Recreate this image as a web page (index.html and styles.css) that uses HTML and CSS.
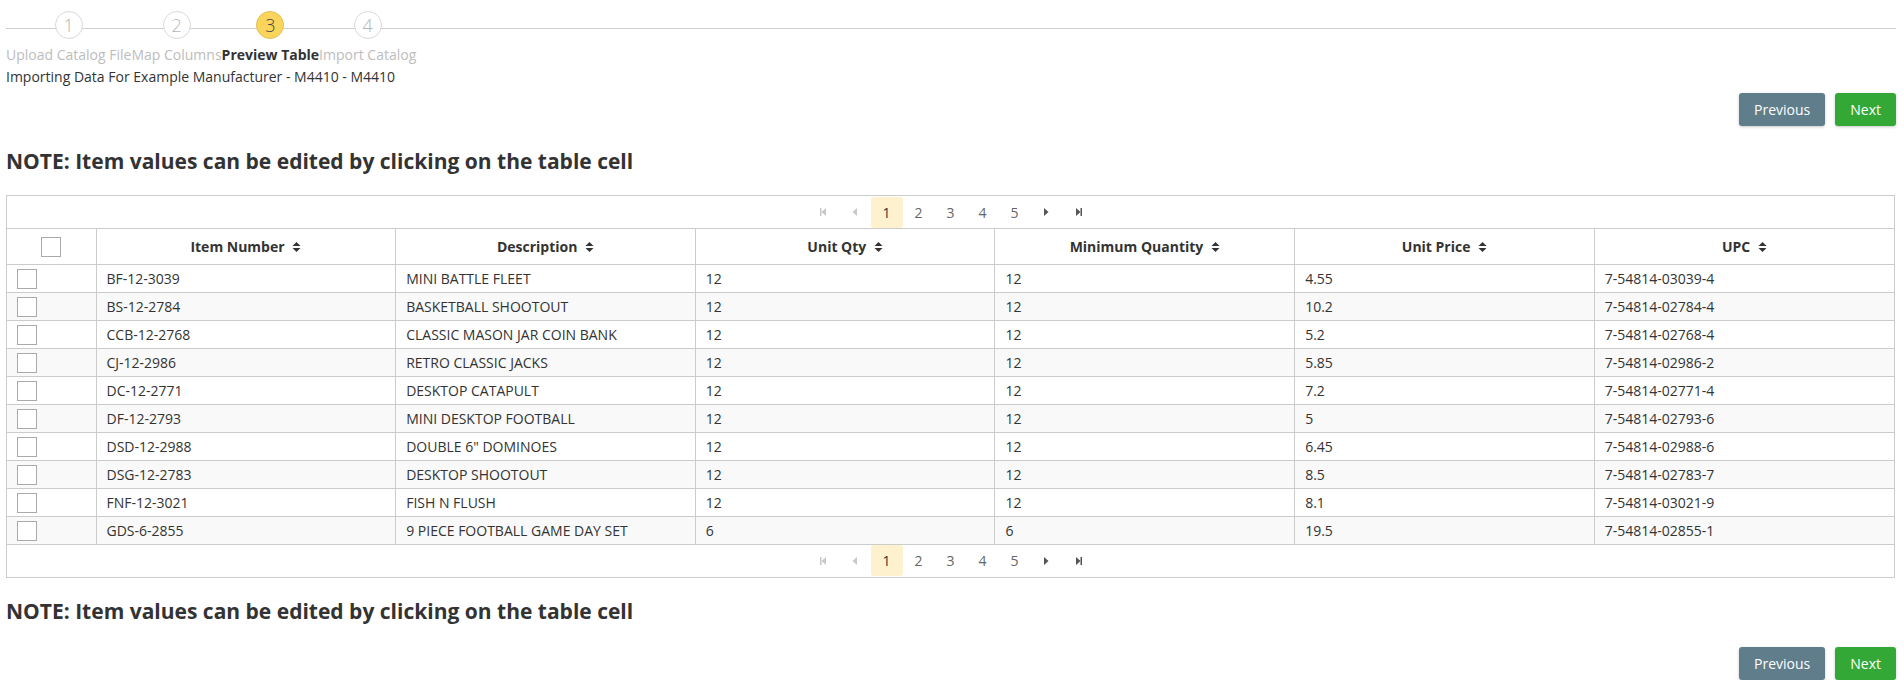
FILE: index.html
```html
<!DOCTYPE html>
<html>
<head>
<meta charset="utf-8">
<link rel="stylesheet" href="styles.css">
</head>
<body>
<div class="page">
  <div class="stepper">
    <div class="step"><span class="circle">1</span><span class="label">Upload Catalog File</span></div>
    <div class="step"><span class="circle">2</span><span class="label">Map Columns</span></div>
    <div class="step active"><span class="circle">3</span><span class="label">Preview Table</span></div>
    <div class="step"><span class="circle">4</span><span class="label">Import Catalog</span></div>
  </div>
  <div class="subtitle">Importing Data For Example Manufacturer - M4410 - M4410</div>

  <div class="actions">
    <button class="btn btn-prev">Previous</button>
    <button class="btn btn-next">Next</button>
  </div>

  <h3 class="note">NOTE: Item values can be edited by clicking on the table cell</h3>

  <div class="grid">
    <div class="pager">
      <span class="pg disabled"><svg width="6" height="8" viewBox="0 0 6 8"><rect x="0" y="0" width="1.5" height="8" fill="currentColor"/><path d="M6 0 L1.5 4 L6 8 Z" fill="currentColor"/></svg></span>
      <span class="pg disabled"><svg width="5" height="8" viewBox="0 0 5 8"><path d="M5 0 L0.5 4 L5 8 Z" fill="currentColor"/></svg></span>
      <span class="pg current">1</span>
      <span class="pg">2</span>
      <span class="pg">3</span>
      <span class="pg">4</span>
      <span class="pg">5</span>
      <span class="pg nav"><svg width="5" height="8" viewBox="0 0 5 8"><path d="M0 0 L4.5 4 L0 8 Z" fill="currentColor"/></svg></span>
      <span class="pg nav"><svg width="6" height="8" viewBox="0 0 6 8"><path d="M0 0 L4.5 4 L0 8 Z" fill="currentColor"/><rect x="4.5" y="0" width="1.5" height="8" fill="currentColor"/></svg></span>
    </div>
    <table class="items">
      <colgroup>
        <col class="c-check"><col><col><col><col><col><col>
      </colgroup>
      <thead>
        <tr>
          <th class="check-head"><span class="box"></span></th>
          <th>Item Number <svg class="sort" width="9" height="12" viewBox="0 0 9 12"><path d="M0.5 5 L4.5 1 L8.5 5 Z M0.5 7 L8.5 7 L4.5 11 Z" fill="currentColor"/></svg></th>
          <th>Description <svg class="sort" width="9" height="12" viewBox="0 0 9 12"><path d="M0.5 5 L4.5 1 L8.5 5 Z M0.5 7 L8.5 7 L4.5 11 Z" fill="currentColor"/></svg></th>
          <th>Unit Qty <svg class="sort" width="9" height="12" viewBox="0 0 9 12"><path d="M0.5 5 L4.5 1 L8.5 5 Z M0.5 7 L8.5 7 L4.5 11 Z" fill="currentColor"/></svg></th>
          <th>Minimum Quantity <svg class="sort" width="9" height="12" viewBox="0 0 9 12"><path d="M0.5 5 L4.5 1 L8.5 5 Z M0.5 7 L8.5 7 L4.5 11 Z" fill="currentColor"/></svg></th>
          <th>Unit Price <svg class="sort" width="9" height="12" viewBox="0 0 9 12"><path d="M0.5 5 L4.5 1 L8.5 5 Z M0.5 7 L8.5 7 L4.5 11 Z" fill="currentColor"/></svg></th>
          <th>UPC <svg class="sort" width="9" height="12" viewBox="0 0 9 12"><path d="M0.5 5 L4.5 1 L8.5 5 Z M0.5 7 L8.5 7 L4.5 11 Z" fill="currentColor"/></svg></th>
        </tr>
      </thead>
      <tbody>
        <tr><td class="check"><span class="box"></span></td><td>BF-12-3039</td><td>MINI BATTLE FLEET</td><td>12</td><td>12</td><td>4.55</td><td>7-54814-03039-4</td></tr>
        <tr><td class="check"><span class="box"></span></td><td>BS-12-2784</td><td>BASKETBALL SHOOTOUT</td><td>12</td><td>12</td><td>10.2</td><td>7-54814-02784-4</td></tr>
        <tr><td class="check"><span class="box"></span></td><td>CCB-12-2768</td><td>CLASSIC MASON JAR COIN BANK</td><td>12</td><td>12</td><td>5.2</td><td>7-54814-02768-4</td></tr>
        <tr><td class="check"><span class="box"></span></td><td>CJ-12-2986</td><td>RETRO CLASSIC JACKS</td><td>12</td><td>12</td><td>5.85</td><td>7-54814-02986-2</td></tr>
        <tr><td class="check"><span class="box"></span></td><td>DC-12-2771</td><td>DESKTOP CATAPULT</td><td>12</td><td>12</td><td>7.2</td><td>7-54814-02771-4</td></tr>
        <tr><td class="check"><span class="box"></span></td><td>DF-12-2793</td><td>MINI DESKTOP FOOTBALL</td><td>12</td><td>12</td><td>5</td><td>7-54814-02793-6</td></tr>
        <tr><td class="check"><span class="box"></span></td><td>DSD-12-2988</td><td>DOUBLE 6" DOMINOES</td><td>12</td><td>12</td><td>6.45</td><td>7-54814-02988-6</td></tr>
        <tr><td class="check"><span class="box"></span></td><td>DSG-12-2783</td><td>DESKTOP SHOOTOUT</td><td>12</td><td>12</td><td>8.5</td><td>7-54814-02783-7</td></tr>
        <tr><td class="check"><span class="box"></span></td><td>FNF-12-3021</td><td>FISH N FLUSH</td><td>12</td><td>12</td><td>8.1</td><td>7-54814-03021-9</td></tr>
        <tr><td class="check"><span class="box"></span></td><td>GDS-6-2855</td><td>9 PIECE FOOTBALL GAME DAY SET</td><td>6</td><td>6</td><td>19.5</td><td>7-54814-02855-1</td></tr>
      </tbody>
    </table>
    <div class="pager bottom">
      <span class="pg disabled"><svg width="6" height="8" viewBox="0 0 6 8"><rect x="0" y="0" width="1.5" height="8" fill="currentColor"/><path d="M6 0 L1.5 4 L6 8 Z" fill="currentColor"/></svg></span>
      <span class="pg disabled"><svg width="5" height="8" viewBox="0 0 5 8"><path d="M5 0 L0.5 4 L5 8 Z" fill="currentColor"/></svg></span>
      <span class="pg current">1</span>
      <span class="pg">2</span>
      <span class="pg">3</span>
      <span class="pg">4</span>
      <span class="pg">5</span>
      <span class="pg nav"><svg width="5" height="8" viewBox="0 0 5 8"><path d="M0 0 L4.5 4 L0 8 Z" fill="currentColor"/></svg></span>
      <span class="pg nav"><svg width="6" height="8" viewBox="0 0 6 8"><path d="M0 0 L4.5 4 L0 8 Z" fill="currentColor"/><rect x="4.5" y="0" width="1.5" height="8" fill="currentColor"/></svg></span>
    </div>
  </div>

  <h3 class="note note-bottom">NOTE: Item values can be edited by clicking on the table cell</h3>

  <div class="actions actions-bottom">
    <button class="btn btn-prev">Previous</button>
    <button class="btn btn-next">Next</button>
  </div>
</div>
</body>
</html>
```

FILE: styles.css
```css
* { box-sizing: border-box; }
html, body { margin: 0; padding: 0; background: #fff; }
body {
  font-family: "Open Sans", "Liberation Sans", sans-serif;
  color: #333;
  font-size: 14px;
}
.page {
  padding: 0 8px 0 6px;
}
.stepper {
  position: relative;
  display: flex;
  padding-top: 11px;
}
.stepper::before {
  content: "";
  position: absolute;
  left: 0;
  right: 0;
  top: 28px;
  height: 1px;
  background: #cfcfcf;
}
.step {
  position: relative;
  display: flex;
  flex-direction: column;
  align-items: center;
}
.circle {
  width: 28px;
  height: 28px;
  border-radius: 50%;
  border: 1px solid #d9d9d9;
  background: #fff;
  color: #b5b5b5;
  font-size: 18px;
  line-height: 26px;
  text-align: center;
  font-weight: 300;
}
.step.active .circle {
  background: #f9d55b;
  border-color: #e5c04e;
  color: #4a4a4a;
}
.label {
  margin-top: 6px;
  line-height: 20px;
  color: #bdbdbd;
  white-space: nowrap;
}
.step.active .label {
  color: #333;
  font-weight: 700;
}
.subtitle {
  margin-top: 2px;
  line-height: 20px;
  color: #333;
}
.actions {
  display: flex;
  justify-content: flex-end;
  gap: 10px;
  margin-top: 6px;
}
.btn {
  font-family: inherit;
  font-size: 14px;
  height: 33px;
  padding: 0 15px;
  border: none;
  border-radius: 3px;
  color: #fff;
  box-shadow: 0 1px 3px rgba(0,0,0,0.22);
}
.btn-prev { background: #607d8b; }
.btn-next { background: #33a837; }
.note {
  margin: 21px 0 19px;
  font-size: 21px;
  font-weight: 700;
  line-height: 29px;
  color: #333;
}
.grid {
  border: 1px solid #cccccc;
  margin-right: 1px;
}
.pager {
  display: flex;
  justify-content: center;
  align-items: center;
  height: 33px;
  border-bottom: 1px solid #cccccc;
  font-size: 14px;
  color: #666;
}
.pager.bottom {
  border-bottom: none;
  height: 32px;
}
.pg {
  width: 32px;
  height: 31px;
  display: flex;
  align-items: center;
  justify-content: center;
  border-radius: 3px;
}
.pg.disabled { color: #c8c8c8; }
.pg.nav { color: #555; }
.pg.current {
  background: #fdf2cd;
  color: #333;
}
.items {
  width: 100%;
  border-collapse: collapse;
  table-layout: fixed;
  font-size: 14px;
  color: #333;
}
.c-check { width: 89px; }
.items th {
  height: 35px;
  font-weight: 700;
  text-align: center;
  border-left: 1px solid #cccccc;
  border-bottom: 1px solid #cccccc;
  padding: 0 10px;
  white-space: nowrap;
}
.items th:first-child, .items td:first-child { border-left: none; }
.sort {
  vertical-align: -1px;
  margin-left: 4px;
  color: #333;
}
.items td {
  height: 28px;
  padding: 0 10px;
  border-left: 1px solid #cccccc;
  border-bottom: 1px solid #cccccc;
  white-space: nowrap;
  vertical-align: middle;
}
.items tbody tr:nth-child(even) td { background: #f9f9f9; }
.box {
  display: inline-block;
  width: 20px;
  height: 20px;
  border: 1px solid #aaaaaa;
  background: #fff;
  vertical-align: middle;
}
.items td.check { padding: 0 0 0 10px; }
.check-head .box { margin-top: 2px; }
.note-bottom {
  margin: 19px 0 21px;
}
.actions-bottom {
  margin-top: 0;
}
```
